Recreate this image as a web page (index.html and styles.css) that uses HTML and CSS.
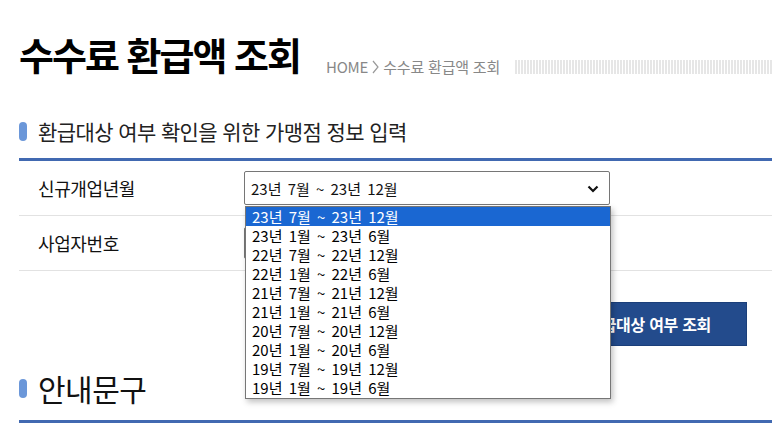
FILE: index.html
```html
<!DOCTYPE html>
<html lang="ko">
<head>
  <meta charset="UTF-8">
  <title>수수료 환급액 조회</title>
  <link rel="stylesheet" href="styles.css">
</head>
<body>
  <div class="page">
    <div class="title-bar">
      <h1>수수료 환급액 조회</h1>
      <div class="location">
        HOME
        <svg class="loc-arrow" width="7" height="14" viewBox="0 0 7 14"><path d="M1 1 L6 7 L1 13" fill="none" stroke="#999" stroke-width="1.2"/></svg>
        수수료 환급액 조회
      </div>
      <div class="stripes"></div>
    </div>

    <h2 class="sec-title">환급대상 여부 확인을 위한 가맹점 정보 입력</h2>
    <table class="form-table">
      <tr>
        <th>신규개업년월</th>
        <td>
          <div class="select-box">
            <span class="select-value">23년 7월 ~ 23년 12월</span>
            <svg class="select-arrow" width="12" height="8" viewBox="0 0 12 8"><path d="M1.5 1.5 L6 6 L10.5 1.5" fill="none" stroke="#111" stroke-width="2.2"/></svg>
            <ul class="options">
              <li class="selected">23년 7월 ~ 23년 12월</li>
              <li>23년 1월 ~ 23년 6월</li>
              <li>22년 7월 ~ 22년 12월</li>
              <li>22년 1월 ~ 22년 6월</li>
              <li>21년 7월 ~ 21년 12월</li>
              <li>21년 1월 ~ 21년 6월</li>
              <li>20년 7월 ~ 20년 12월</li>
              <li>20년 1월 ~ 20년 6월</li>
              <li>19년 7월 ~ 19년 12월</li>
              <li>19년 1월 ~ 19년 6월</li>
            </ul>
          </div>
        </td>
      </tr>
      <tr>
        <th>사업자번호</th>
        <td><input type="text" class="biz-no"></td>
      </tr>
    </table>

    <div class="btn-area">
      <button class="btn-search">환급대상 여부 조회</button>
    </div>

    <h2 class="sec-title large">안내문구</h2>
  </div>
</body>
</html>
```

FILE: styles.css
```css
body {
  margin: 0;
  background: #fff;
  font-family: "Noto Sans CJK KR", "Noto Sans", sans-serif;
  color: #111;
}
.page {
  padding-left: 19px;
}
.title-bar {
  display: flex;
  align-items: flex-end;
  padding-top: 31px;
}
.title-bar h1 {
  margin: 0;
  font-size: 38px;
  line-height: 46px;
  font-weight: 700;
  letter-spacing: -2px;
  color: #000;
}
.location {
  display: flex;
  align-items: center;
  gap: 3px;
  margin-left: 26px;
  margin-bottom: 1px;
  font-size: 15px;
  line-height: 18px;
  color: #888;
  letter-spacing: -0.2px;
}
.loc-arrow {
  margin: 0 1px;
}
.stripes {
  flex: 1;
  height: 14px;
  margin-left: 15px;
  margin-bottom: 3px;
  background: repeating-linear-gradient(90deg, #e6e6e6 0 2px, #fff 2px 3px);
}
.sec-title {
  position: relative;
  margin: 42px 0 0;
  padding-left: 19px;
  padding-bottom: 15px;
  font-size: 21px;
  line-height: 24px;
  font-weight: 400;
  letter-spacing: -0.6px;
  color: #222;
  border-bottom: 3px solid #4169b1;
}
.sec-title::before {
  content: "";
  position: absolute;
  left: 0;
  top: 3px;
  width: 8px;
  height: 19px;
  border-radius: 4px;
  background: #6b97d9;
}
.sec-title.large {
  margin-top: 24px;
  padding-bottom: 14px;
  font-size: 30px;
  line-height: 36px;
  letter-spacing: -0.5px;
  color: #111;
}
.sec-title.large::before {
  top: 9px;
}
.form-table {
  width: 100%;
  border-collapse: collapse;
}
.form-table th,
.form-table td {
  height: 54px;
  padding: 0;
  border-bottom: 1px solid #e2e2e2;
}
.form-table th {
  width: 206px;
  padding-left: 19px;
  text-align: left;
  font-size: 18px;
  font-weight: 400;
  letter-spacing: -0.4px;
  color: #111;
}
.select-box {
  position: relative;
  border: 1px solid #767676;
  border-radius: 2px;
  display: flex;
  align-items: center;
  padding-left: 6px;
  box-sizing: border-box;
  width: 366px;
  height: 34px;
  font-size: 15px;
  word-spacing: 2px;
}
.select-arrow {
  position: absolute;
  right: 10px;
  top: 13px;
}
.options {
  position: absolute;
  top: 34px;
  left: 0;
  width: 366px;
  box-sizing: border-box;
  margin: 0;
  padding: 0 0 1px;
  list-style: none;
  background: #fff;
  border: 1px solid #767676;
  box-shadow: 2px 3px 6px rgba(0, 0, 0, 0.25);
  z-index: 5;
}
.options li {
  height: 19px;
  line-height: 19px;
  padding-left: 6px;
  font-size: 15px;
  word-spacing: 2px;
  color: #000;
}
.options li.selected {
  background: #1a67d2;
  color: #fff;
}
.biz-no {
  width: 366px;
  height: 32px;
  box-sizing: border-box;
  border: 1px solid #767676;
  border-radius: 2px;
}
.btn-area {
  display: flex;
  justify-content: flex-end;
  padding: 31px 25px 0 0;
}
.btn-search {
  width: 190px;
  height: 44px;
  border: 1px solid #1b3f7a;
  background: #234b8c;
  color: #fff;
  font-family: inherit;
  font-size: 16px;
  font-weight: 700;
  letter-spacing: -0.3px;
  text-align: right;
  padding: 0 35px 0 0;
}
```
